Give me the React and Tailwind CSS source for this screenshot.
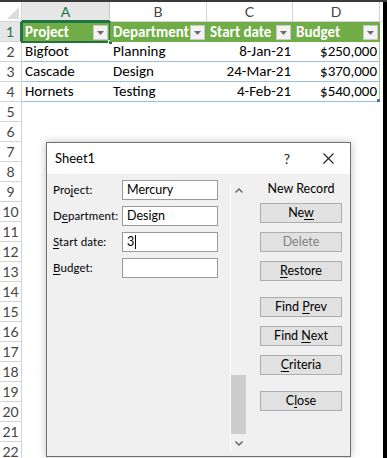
import React from "react";

const cols = [
  { l: "A", w: "w-[88px]" },
  { l: "B", w: "w-[97px]" },
  { l: "C", w: "w-[86px]" },
  { l: "D", w: "w-[87px]" },
];

const data = [
  ["Bigfoot", "Planning", "8-Jan-21", "$250,000"],
  ["Cascade", "Design", "24-Mar-21", "$370,000"],
  ["Hornets", "Testing", "4-Feb-21", "$540,000"],
];

const xl = { fontFamily: "Carlito, Lato, 'Liberation Sans', sans-serif" };
const ui = { fontFamily: "Lato, 'Noto Sans', 'Liberation Sans', sans-serif" };

function Drop() {
  return (
    <div className="absolute right-[2px] top-[3px] w-[15px] h-[15px] bg-[#f3f3f3] border border-[#c8c8c8] flex items-center justify-center">
      <svg width="7" height="4" viewBox="0 0 7 4">
        <path d="M0 0H7L3.5 4Z" fill="#6b6b6b" />
      </svg>
    </div>
  );
}

function U({ children }) {
  return <span className="underline underline-offset-2">{children}</span>;
}

function Btn({ children, disabled }) {
  return (
    <div
      className={`h-[20px] w-[82px] bg-[#e1e1e1] border border-[#adadad] flex items-center justify-center text-[12.5px] ${
        disabled ? "text-[#838383]" : "text-black"
      }`}
    >
      <span className="whitespace-pre">{children}</span>
    </div>
  );
}

function Field({ label, value, caret }) {
  return (
    <div className="flex items-center h-[20px]">
      <div className="w-[75px] pl-[6px] text-[11.5px] tracking-[0.1px] text-black whitespace-nowrap">{label}</div>
      <div className="w-[96px] h-[20px] bg-white border border-[#9a9a9a] flex items-center pl-[4px] text-[12.5px] text-black">
        {value}
        {caret && <span className="inline-block w-[1px] h-[14px] bg-black ml-[1px]" />}
      </div>
    </div>
  );
}

export default function App() {
  return (
    <div className="relative w-[387px] h-[458px] overflow-hidden bg-white">
      <div className="h-[2px] bg-[#3a3a3a]" />
      <div className="flex">
        <div className="w-[383px]">
          {/* column headers */}
          <div className="flex h-[20px]" style={ui}>
            <div className="w-[22px] h-[20px] border-r border-b border-[#d4d4d4] relative">
              <svg className="absolute right-[2px] bottom-[2px]" width="12" height="12" viewBox="0 0 12 12">
                <path d="M12 0V12H0Z" fill="#dcdcdc" />
              </svg>
            </div>
            {cols.map((c, i) => (
              <div
                key={c.l}
                className={`${c.w} h-[20px] border-r flex items-center justify-center text-[14px] ${
                  i === 0
                    ? "bg-[#e6e6e6] text-[#217346] border-b-2 border-b-[#217346] border-r-[#c8c8c8]"
                    : "text-[#444] border-b border-[#d4d4d4]"
                }`}
              >
                {c.l}
              </div>
            ))}
            <div className="flex-1 border-b border-[#d4d4d4]" />
          </div>
          {/* rows */}
          {Array.from({ length: 22 }, (_, r) => {
            const n = r + 1;
            return (
              <div key={n} className="flex h-[20px]">
                <div
                  className={`w-[22px] h-[20px] border-b border-[#d4d4d4] flex items-center justify-center text-[14px] ${
                    n === 1
                      ? "bg-[#e6e6e6] text-[#217346] border-r-2 border-r-[#217346]"
                      : "text-[#444] border-r"
                  }`}
                  style={ui}
                >
                  {n}
                </div>
                {n === 1 &&
                  ["Project", "Department", "Start date", "Budget"].map((t, i) => (
                    <div
                      key={t}
                      className={`${cols[i].w} h-[20px] bg-[#70ad47] relative text-white font-bold text-[15px] flex items-center pl-[3px]`}
                      style={xl}
                    >
                      {t}
                      <Drop />
                      {i === 0 && (
                        <>
                          <div className="absolute left-[-1px] top-[-1px] right-[-1px] bottom-[-1px] border-2 border-[#217346]" />
                          <div className="absolute right-[-3px] bottom-[-3px] w-[5px] h-[5px] bg-[#217346] border border-white" />
                        </>
                      )}
                    </div>
                  ))}
                {n >= 2 &&
                  n <= 4 &&
                  data[n - 2].map((t, i) => (
                    <div
                      key={i}
                      className={`${cols[i].w} h-[20px] border-b border-[#9bc2e6] relative flex items-center text-[15px] text-black ${
                        i >= 2 ? "justify-end pr-[2px]" : "pl-[3px]"
                      } ${i === 3 ? "border-r border-r-[#a9d08e]" : ""}`}
                      style={xl}
                    >
                      {t}
                      {i === 3 && n === 4 && (
                        <div className="absolute right-[-1px] bottom-[-1px] w-[3px] h-[3px] bg-[#4472c4]" />
                      )}
                    </div>
                  ))}
              </div>
            );
          })}
        </div>
        <div className="flex-1 bg-black" />
      </div>

      {/* Data form dialog */}
      <div
        className="absolute left-[46px] top-[142px] w-[305px] h-[315px] bg-[#f0f0f0] border border-[#6f6f6f] shadow-[0_0_8px_rgba(0,0,0,0.25)] flex flex-col"
        style={ui}
      >
        <div className="h-[31px] bg-white flex items-center justify-between pl-[8px] pr-[16px]">
          <span className="text-[13px] text-black">Sheet1</span>
          <div className="flex items-center gap-[33px]">
            <span className="text-[14px] text-[#222]">?</span>
            <svg width="11" height="11" viewBox="0 0 11 11">
              <path d="M0.5 0.5L10.5 10.5M10.5 0.5L0.5 10.5" stroke="#222" strokeWidth="1.1" />
            </svg>
          </div>
        </div>
        <div className="flex-1 flex">
          <div className="w-[183px] pt-[6px] flex flex-col gap-[6px]">
            <Field label={<>Pro<U>j</U>ect:</>} value="Mercury" />
            <Field label={<>D<U>e</U>partment:</>} value="Design" />
            <Field label={<><U>S</U>tart date:</>} value="3" caret />
            <Field label={<><U>B</U>udget:</>} value="" />
          </div>
          <div className="mt-[9px] mb-[5px] w-[16px] border-l border-white flex flex-col items-center">
            <svg className="mt-[5px]" width="8" height="5" viewBox="0 0 8 5">
              <path d="M0.5 4.5L4 1L7.5 4.5" stroke="#606060" strokeWidth="1.4" fill="none" />
            </svg>
            <div className="flex-1" />
            <div className="w-[15px] h-[59px] bg-[#cdcdcd]" />
            <svg className="mt-[7px] mb-[5px]" width="8" height="5" viewBox="0 0 8 5">
              <path d="M0.5 0.5L4 4L7.5 0.5" stroke="#606060" strokeWidth="1.4" fill="none" />
            </svg>
          </div>
          <div className="ml-[14px] pt-[7px] flex flex-col items-center w-[82px]">
            <div className="h-[16px] text-[12.5px] text-black leading-[16px] whitespace-nowrap">New Record</div>
            <div className="mt-[6px] flex flex-col gap-[9px]">
              <Btn>Ne<U>w</U></Btn>
              <Btn disabled>Delete</Btn>
              <Btn><U>R</U>estore</Btn>
            </div>
            <div className="mt-[16px] flex flex-col gap-[9px]">
              <Btn>Find <U>P</U>rev</Btn>
              <Btn>Find <U>N</U>ext</Btn>
              <Btn><U>C</U>riteria</Btn>
            </div>
            <div className="mt-[16px]">
              <Btn>C<U>l</U>ose</Btn>
            </div>
          </div>
        </div>
      </div>
    </div>
  );
}
